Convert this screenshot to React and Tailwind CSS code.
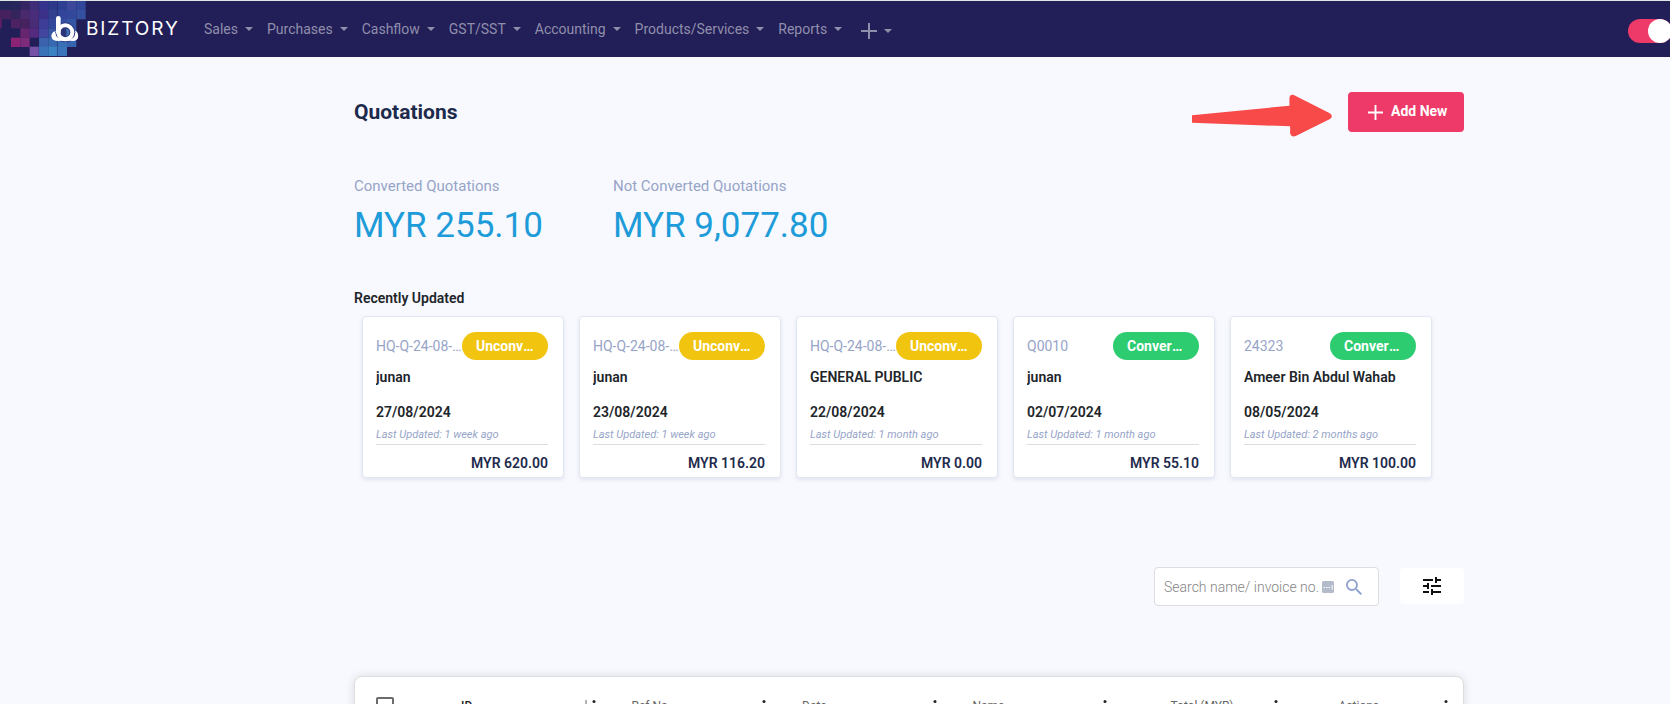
import React from "react";

const menus = ["Sales", "Purchases", "Cashflow", "GST/SST", "Accounting", "Products/Services", "Reports"];

const quotations = [
  { code: "HQ-Q-24-08-0003", converted: false, name: "junan", date: "27/08/2024", updated: "1 week ago", amount: "620.00" },
  { code: "HQ-Q-24-08-0002", converted: false, name: "junan", date: "23/08/2024", updated: "1 week ago", amount: "116.20" },
  { code: "HQ-Q-24-08-0001", converted: false, name: "GENERAL PUBLIC", date: "22/08/2024", updated: "1 month ago", amount: "0.00" },
  { code: "Q0010", converted: true, name: "junan", date: "02/07/2024", updated: "1 month ago", amount: "55.10" },
  { code: "24323", converted: true, name: "Ameer Bin Abdul Wahab", date: "08/05/2024", updated: "2 months ago", amount: "100.00" },
];

const columns = [
  { label: "ID", sorted: true, align: "text-left" },
  { label: "Ref No", align: "text-left" },
  { label: "Date", align: "text-left" },
  { label: "Name", align: "text-left" },
  { label: "Total (MYR)", align: "text-right" },
  { label: "Actions", align: "text-center" },
];

// Mosaic tiles behind the logo: x, y, width, colour
const tiles = [
  [0, 3, 33, "#24265a"], [33, 3, 28, "#26265c"], [61, 3, 28, "#352663"], [89, 3, 28, "#402d78"], [117, 3, 28, "#36338c"], [145, 3, 28, "#2d3a8c"], [173, 3, 28, "#2c3f90"], [201, 3, 28, "#3d489b"], [229, 3, 28, "#33479a"],
  [0, 30, 33, "#45225e"], [33, 30, 28, "#35235c"], [61, 30, 28, "#4a2a6c"], [89, 30, 28, "#4a2d7a"], [117, 30, 28, "#3a3088"], [145, 30, 28, "#31408f"], [173, 30, 28, "#33459a"], [201, 30, 28, "#33489b"], [229, 30, 28, "#34509f"],
  [0, 57, 5, "#5d2064"], [33, 57, 28, "#4d2262"], [61, 57, 28, "#46235f"], [89, 57, 28, "#482c76"], [117, 57, 28, "#3e3d97"], [145, 57, 28, "#33479b"], [173, 57, 28, "#344d9e"], [201, 57, 28, "#3455a4"],
  [61, 85, 28, "#682670"], [89, 85, 28, "#552b82"], [117, 85, 28, "#42469f"], [145, 85, 28, "#3757a5"], [173, 85, 28, "#355aa8"], [201, 85, 28, "#3560ab"],
  [33, 113, 28, "#8d2375"], [61, 113, 28, "#7d2b7b"], [117, 113, 28, "#3c62ae"], [145, 113, 28, "#3868b0"], [173, 113, 28, "#3870b5"], [201, 113, 28, "#3664ae"],
  [89, 140, 28, "#7552a5"], [117, 140, 28, "#3a73b8"], [145, 140, 28, "#3a82c2"], [173, 140, 28, "#3a74ba"],
];

function Logo() {
  return (
    <a href="#" aria-label="Biztory home" className="flex h-14 w-[197px] shrink-0 items-center">
      <svg viewBox="0 3 258 168" className="h-14 w-[86px] shrink-0" aria-hidden="true">
        {tiles.map(([x, y, w, fill]) => (
          <rect key={`${x}-${y}`} x={x} y={y} width={w} height="28" fill={fill} />
        ))}
        <path d="M116 3V168M172 3V168" stroke="#231f58" strokeOpacity=".4" strokeWidth="2" />
        <path d="M172 122a13 13 0 0 1-7-28l9-3 45 0a16 16 0 0 1 5 31z" fill="#fff" />
        <circle cx="196" cy="97" r="30" fill="#2f3f8c" />
        <circle cx="196" cy="97" r="21" fill="#2b3478" stroke="#fff" strokeWidth="12" />
        <path d="M175 97V55" stroke="#fff" strokeWidth="14" strokeLinecap="round" />
        <path d="M197 86a11 11 0 0 1 0 22c4-7 4-14 0-22z" fill="#3d74b8" />
        <path d="M161 113q3 9 14 9h44q11 0 15-9l-5-6q-12 10-31 15-20-4-31-15z" fill="#fff" />
      </svg>
      <span className="font-['Inter'] text-[19px] leading-6 tracking-widest text-white">BIZTORY</span>
    </a>
  );
}

function Caret() {
  return <span className="ml-[7px] inline-block h-0 w-0 border-x-4 border-t-4 border-x-transparent border-t-current" />;
}

function Plus({ className }) {
  return (
    <svg viewBox="0 0 16 16" className={className} aria-hidden="true">
      <path d="M8 0V16M0 8H16" stroke="currentColor" strokeWidth="2" />
    </svg>
  );
}

function Card({ item }) {
  return (
    <article className="flex w-[202px] shrink-0 flex-col rounded border border-[#e1e7f1] bg-white pt-[15px] pr-[15px] pb-1 pl-[13px] shadow-[0_2px_4px_rgba(120,140,180,0.18)]">
      <div className="flex h-7 items-center justify-between">
        <span className="min-w-0 flex-1 truncate text-sm leading-5 text-[#96a4c8]">{item.code}</span>
        <span className={`w-[86px] shrink-0 truncate rounded-full px-[14px] text-sm leading-7 font-bold text-white ${item.converted ? "bg-[#2ecc71]" : "bg-[#f1c40f]"}`}>
          {item.converted ? "Converted" : "Unconverted"}
        </span>
      </div>
      <h3 className="mt-[7px] truncate text-sm leading-5 font-semibold text-[#212529]">{item.name}</h3>
      <p className="mt-[15px] text-sm leading-5 font-semibold text-[#212529]">{item.date}</p>
      <p className="mt-[5px] border-b border-[#dcdde0] pb-px text-[11px] leading-4 text-[#96a4c8] italic">Last Updated: {item.updated}</p>
      <p className="mt-2 text-right text-sm leading-5 font-semibold text-[#1e2a4c]">MYR {item.amount}</p>
    </article>
  );
}

export default function App() {
  return (
    <div className="h-screen overflow-hidden bg-[#f8f9fe] font-['Roboto',sans-serif] text-[#212529]">
      <header className="flex h-[57px] items-center overflow-hidden border-t border-[#dfe5e3] bg-[#221e58]">
        <Logo />
        <nav className="flex items-center text-sm leading-5 text-[#908fab]">
          {menus.map((m) => (
            <button key={m} type="button" className="flex items-center px-[7px] pb-px whitespace-nowrap">
              {m}
              <Caret />
            </button>
          ))}
          <button type="button" aria-label="Quick add" className="flex items-center px-2 pt-1">
            <Plus className="ml-1 h-4 w-4" />
            <Caret />
          </button>
        </nav>
        <input
          type="checkbox"
          role="switch"
          defaultChecked
          aria-label="Switch mode"
          className="-mr-0.5 mt-1 ml-auto h-6 w-11 shrink-0 appearance-none rounded-full bg-[#ee3a68] before:ml-auto before:block before:h-6 before:w-6 before:rounded-full before:bg-white"
        />
      </header>

      <main className="pr-[206px] pl-[354px]">
        <div className="flex items-start justify-between pt-[35px]">
          <h1 className="pt-1 text-[21px] leading-8 font-bold text-[#1e2a4c]">Quotations</h1>
          <div className="flex items-start gap-4">
            <svg viewBox="0 0 421 129" className="mt-0.5 h-[43px] w-[140px]" aria-hidden="true">
              <path d="M0 64L293 35V10Q295-1 306 3L413 57Q427 66 415 75L312 126Q299 131 295 119V97L0 86z" fill="#f84a48" />
            </svg>
            <button type="button" className="flex h-10 w-[116px] items-center rounded bg-[#ee3a68] pb-0.5 pl-5 text-sm leading-5 font-bold whitespace-nowrap text-white">
              <Plus className="mt-0.5 mr-2 h-[15px] w-[15px]" />
              Add New
            </button>
          </div>
        </div>

        <section className="mt-[39px] flex gap-[70px]">
          <div>
            <h2 className="text-[15px] leading-5 text-[#96a4c8]">Converted Quotations</h2>
            <p className="mt-2 text-[35px] leading-[44px] text-[#1e9cd9]">MYR 255.10</p>
          </div>
          <div>
            <h2 className="text-[15px] leading-5 text-[#96a4c8]">Not Converted Quotations</h2>
            <p className="mt-2 text-[35px] leading-[44px] text-[#1e9cd9]">MYR 9,077.80</p>
          </div>
        </section>

        <section>
          <h2 className="mt-10 text-sm leading-5 font-semibold">Recently Updated</h2>
          <div className="mt-2 flex gap-[15px] pl-2">
            {quotations.map((q) => (
              <Card key={q.code} item={q} />
            ))}
          </div>
        </section>

        <div className="mt-[89px] flex items-center justify-end gap-[21px]">
          <label className="flex h-[39px] w-[225px] items-center rounded border border-[#dcdde0] bg-white pl-[9px]">
            <input
              type="text"
              aria-label="Search quotations"
              placeholder="Search name/ invoice no."
              className="w-[158px] min-w-0 bg-transparent text-sm leading-5 font-light outline-none placeholder:text-[#858585]"
            />
            <svg viewBox="0 0 12 12" className="h-3 w-3 shrink-0" aria-hidden="true">
              <rect width="12" height="12" rx="1.5" fill="#b4bccb" />
              <path d="M1.5 6.5H9" stroke="#fff" strokeWidth="1.2" strokeDasharray="1.5 1" />
              <path d="M10.2 4V8.5" stroke="#fff" />
            </svg>
            <svg viewBox="3 3 17.5 17.5" className="ml-3 h-4 w-4 shrink-0" fill="#8fa2cf" aria-hidden="true">
              <path d="M15.5 14h-.79l-.28-.27A6.471 6.471 0 0 0 16 9.5 6.5 6.5 0 1 0 9.5 16c1.61 0 3.09-.59 4.23-1.57l.27.28v.79l5 4.99L20.49 19l-4.99-5zm-6 0C7.01 14 5 11.99 5 9.5S7.01 5 9.5 5 14 7.01 14 9.5 11.99 14 9.5 14z" />
            </svg>
          </label>
          <button type="button" aria-label="Filters" className="mb-px flex h-9 w-16 items-center justify-center rounded bg-white">
            <svg viewBox="3 3 18 18" className="h-[18px] w-[18px]" fill="#111" aria-hidden="true">
              <path d="M3 17v2h6v-2H3zM3 5v2h10V5H3zm10 16v-2h8v-2h-8v-2h-2v6h2zM7 9v2H3v2h4v2h2V9H7zm14 4v-2H11v2h10zm-6-4h2V7h4V5h-4V3h-2v6z" />
            </svg>
          </button>
        </div>

        <section className="mt-[70px] rounded-lg border border-[#dedede] bg-white pr-2 shadow-[0_0_10px_rgba(0,0,0,0.12)]">
          <table className="w-full table-fixed">
            <thead>
              <tr className="h-[58px] text-xs leading-4 text-[#666]">
                <th className="w-[77px] pl-[21px] text-left">
                  <input type="checkbox" aria-label="Select all" className="block h-[18px] w-[18px] appearance-none rounded-xs border-2 border-[#6b6b6b]" />
                </th>
                {columns.map((c) => (
                  <th key={c.label} className={`font-normal ${c.align}`}>
                    <div className="flex items-center pr-[7px] pl-[29px]">
                      <span className={`flex-1 ${c.label === "Total (MYR)" ? "pr-10" : ""} ${c.label === "Actions" ? "pr-10" : ""} ${c.sorted ? "font-medium text-[#222]" : ""}`}>{c.label}</span>
                      {c.sorted && (
                        <svg viewBox="0 0 8 12" className="mr-0.5 h-3 w-2" aria-hidden="true">
                          <path d="M4 0V11M1 8L4 11L7 8" stroke="#666" fill="none" />
                        </svg>
                      )}
                      <svg viewBox="0 0 4 12" className="h-3 w-1" fill="#222" aria-hidden="true">
                        <circle cx="2" cy="1.5" r="1.5" />
                        <circle cx="2" cy="6" r="1.5" />
                        <circle cx="2" cy="10.5" r="1.5" />
                      </svg>
                    </div>
                  </th>
                ))}
              </tr>
            </thead>
          </table>
        </section>
      </main>
    </div>
  );
}
